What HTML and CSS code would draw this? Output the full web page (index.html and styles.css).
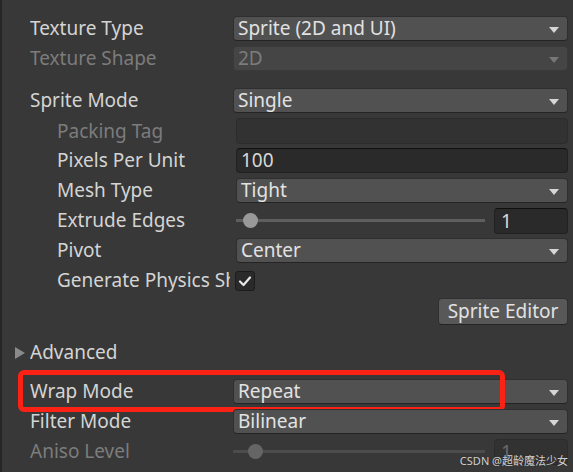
FILE: index.html
```html
<!DOCTYPE html>
<html>
<head>
<meta charset="utf-8">
<link rel="stylesheet" href="styles.css">
</head>
<body>
<div class="panel">
  <div class="row">
    <div class="label">Texture Type</div>
    <div class="dropdown"><span>Sprite (2D and UI)</span><i class="arrow"></i></div>
  </div>
  <div class="row">
    <div class="label dim">Texture Shape</div>
    <div class="dropdown disabled"><span>2D</span><i class="arrow"></i></div>
  </div>

  <div class="row section">
    <div class="label">Sprite Mode</div>
    <div class="dropdown"><span>Single</span><i class="arrow"></i></div>
  </div>
  <div class="row sub">
    <div class="label dim">Packing Tag</div>
    <div class="textfield disabled"></div>
  </div>
  <div class="row sub">
    <div class="label">Pixels Per Unit</div>
    <div class="textfield">100</div>
  </div>
  <div class="row sub">
    <div class="label">Mesh Type</div>
    <div class="dropdown"><span>Tight</span><i class="arrow"></i></div>
  </div>
  <div class="row sub">
    <div class="label">Extrude Edges</div>
    <div class="slider">
      <div class="track"><div class="thumb" style="left: 7px"></div></div>
      <div class="numfield">1</div>
    </div>
  </div>
  <div class="row sub">
    <div class="label">Pivot</div>
    <div class="dropdown"><span>Center</span><i class="arrow"></i></div>
  </div>
  <div class="row sub">
    <div class="label">Generate Physics Shape</div>
    <div class="checkrow">
      <div class="checkbox">
        <svg width="14" height="12" viewBox="0 0 14 12"><polyline points="2,6.5 5.5,10 12,2.5" fill="none" stroke="#e8e8e8" stroke-width="2.2" stroke-linecap="round" stroke-linejoin="round"/></svg>
      </div>
    </div>
  </div>
  <div class="row buttonrow">
    <div class="button">Sprite Editor</div>
  </div>

  <div class="row foldout">
    <i class="fold-arrow"></i>
    <div class="label">Advanced</div>
  </div>

  <div class="row highlighted">
    <div class="label">Wrap Mode</div>
    <div class="dropdown"><span>Repeat</span><i class="arrow"></i></div>
    <div class="redbox"></div>
  </div>
  <div class="row">
    <div class="label">Filter Mode</div>
    <div class="dropdown"><span>Bilinear</span><i class="arrow"></i></div>
  </div>
  <div class="row">
    <div class="label dim">Aniso Level</div>
    <div class="slider disabled">
      <div class="track"><div class="thumb" style="left: 15px"></div></div>
      <div class="numfield">1</div>
    </div>
  </div>
</div>
<div class="watermark">CSDN @超龄魔法少女</div>
</body>
</html>
```

FILE: styles.css
```css
html, body {
  margin: 0;
  padding: 0;
  background: #383838;
  width: 573px;
  height: 472px;
  overflow: hidden;
}

body {
  font-family: "Noto Sans", "Noto Sans CJK SC", sans-serif;
  font-size: 19px;
  color: #d4d4d4;
  position: relative;
}

.panel {
  border-left: 2px solid #262626;
  height: 472px;
  box-sizing: border-box;
  padding: 16px 5px 0 28px;
  display: flex;
  flex-direction: column;
  gap: 5px;
}

.row {
  display: grid;
  grid-template-columns: 203px 1fr;
  height: 25px;
  align-items: center;
  position: relative;
}

.row.sub {
  padding-left: 27px;
  grid-template-columns: 179px 1fr;
}

.row.section {
  margin-top: 12px;
}

.label {
  white-space: nowrap;
  overflow: hidden;
  line-height: 25px;
  margin-right: 6px;
}

.label.dim {
  color: #7c7c7c;
}

.dropdown {
  height: 25px;
  box-sizing: border-box;
  background: #515151;
  border: 1px solid #2f2f2f;
  border-bottom-color: #242424;
  border-radius: 4px;
  display: flex;
  align-items: center;
  justify-content: space-between;
  padding: 0 8px 0 4px;
  color: #e2e2e2;
  line-height: 23px;
}

.dropdown.disabled {
  background: #454545;
  border-color: #3a3a3a;
  color: #7c7c7c;
}

.arrow {
  width: 0;
  height: 0;
  border-left: 5px solid transparent;
  border-right: 5px solid transparent;
  border-top: 6px solid #d6d6d6;
  margin-top: 2px;
}

.dropdown.disabled .arrow {
  border-top-color: #777;
}

.textfield {
  height: 25px;
  box-sizing: border-box;
  background: #2a2a2a;
  border: 1px solid #212121;
  border-top-color: #101010;
  border-radius: 4px;
  padding: 0 4px;
  line-height: 23px;
  color: #d8d8d8;
}

.textfield.disabled {
  background: #323232;
  border-color: #2c2c2c;
  height: 26px;
}

.slider {
  display: flex;
  align-items: center;
  gap: 9px;
  height: 25px;
}

.track {
  flex: 1;
  height: 3px;
  background: #5e5e5e;
  position: relative;
}

.thumb {
  position: absolute;
  top: -6px;
  width: 15px;
  height: 15px;
  border-radius: 50%;
  background: #999;
}

.numfield {
  width: 74px;
  height: 26px;
  box-sizing: border-box;
  background: #2a2a2a;
  border: 1px solid #212121;
  border-top-color: #101010;
  border-radius: 4px;
  padding: 0 6px;
  line-height: 24px;
  color: #d8d8d8;
}

.slider.disabled .track {
  background: #4c4c4c;
}

.slider.disabled .thumb {
  background: #656565;
}

.slider.disabled .numfield {
  background: #323232;
  border-color: #2c2c2c;
  color: #6a6a6a;
}

.checkrow {
  display: flex;
  align-items: center;
}

.checkbox {
  width: 20px;
  height: 20px;
  box-sizing: border-box;
  background: #2a2a2a;
  border: 1px solid #1c1c1c;
  border-radius: 3px;
  display: flex;
  align-items: center;
  justify-content: center;
  margin-left: -1px;
}

.buttonrow {
  display: flex;
  justify-content: flex-end;
  height: 27px;
}

.button {
  width: 130px;
  height: 27px;
  box-sizing: border-box;
  background: #585858;
  border: 1px solid #303030;
  border-bottom-color: #242424;
  border-radius: 4px;
  text-align: center;
  line-height: 24px;
  color: #e2e2e2;
}

.foldout {
  display: flex;
  align-items: center;
  margin-top: 10px;
}

.fold-arrow {
  position: absolute;
  left: -15px;
  top: 7px;
  width: 0;
  height: 0;
  border-top: 6px solid transparent;
  border-bottom: 6px solid transparent;
  border-left: 10px solid #8a8a8a;
}

.highlighted {
  margin-top: 9px;
}

.redbox {
  position: absolute;
  left: -12px;
  right: 63px;
  top: -9px;
  bottom: -8px;
  border: 5px solid #fa2115;
  border-radius: 6px;
  pointer-events: none;
}

.watermark {
  position: absolute;
  right: 5px;
  bottom: 4px;
  font-size: 11px;
  color: #cfcfcf;
  font-family: "Noto Sans", "Noto Sans CJK SC", sans-serif;
  text-shadow: 0 0 2px #333;
}
```
